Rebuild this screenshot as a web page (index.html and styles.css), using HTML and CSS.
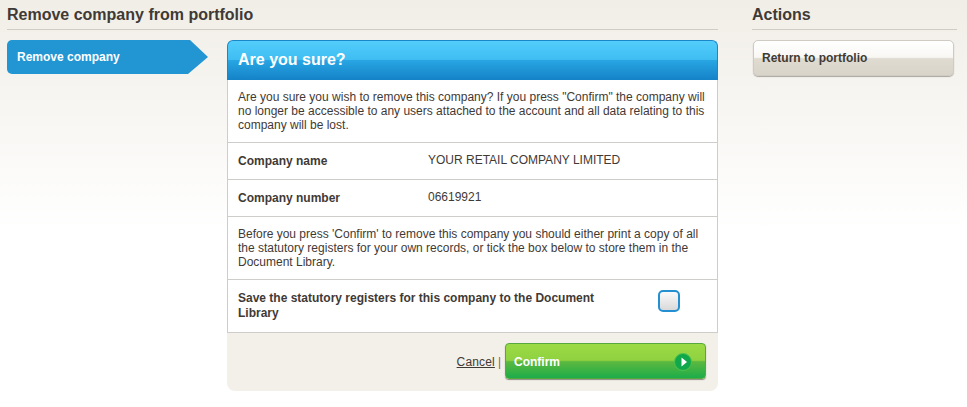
FILE: index.html
```html
<!DOCTYPE html>
<html lang="en">
<head>
  <meta charset="UTF-8" />
  <title>Remove company from portfolio</title>
  <link rel="stylesheet" href="styles.css">
</head>
<body>
  <div id="page">
    <!-- Main column -->
    <div id="content">
      <h1 class="page-title">Remove company from portfolio</h1>
      <div id="columns">
        <div class="step-tab">Remove company</div>
        <div id="panel">
          <h2 class="panel-head">Are you sure?</h2>
          <div class="panel-body">
            <p class="row text-row">Are you sure you wish to remove this company? If you press "Confirm" the company will no longer be accessible to any users attached to the account and all data relating to this company will be lost.</p>
            <div class="row field-row">
              <span class="field-label">Company name</span>
              <span class="field-value">YOUR RETAIL COMPANY LIMITED</span>
            </div>
            <div class="row field-row">
              <span class="field-label">Company number</span>
              <span class="field-value">06619921</span>
            </div>
            <p class="row text-row">Before you press 'Confirm' to remove this company you should either print a copy of all the statutory registers for your own records, or tick the box below to store them in the Document Library.</p>
            <div class="row save-row">
              <span class="save-label">Save the statutory registers for this company to the Document Library</span>
              <span class="tick-box"></span>
            </div>
          </div>
          <div class="panel-foot">
            <a class="cancel-link" href="#">Cancel</a>
            <span class="divider">|</span>
            <a class="confirm-btn" href="#">
              Confirm
              <span class="confirm-icon">
                <svg width="18" height="18" viewBox="0 0 18 18"><circle cx="9" cy="9" r="8.5" fill="#10a84a" stroke="#4fc24f"/><path d="M7.5 4.5l5.5 4.5-5.5 4.5z" fill="#fff"/></svg>
              </span>
            </a>
          </div>
        </div>
      </div>
    </div>
    <!-- Actions column -->
    <div id="actions">
      <h1 class="page-title">Actions</h1>
      <a class="action-btn" href="#">Return to portfolio</a>
    </div>
  </div>
</body>
</html>
```

FILE: styles.css
```css
* {
  box-sizing: border-box;
  margin: 0;
  padding: 0;
}
html, body {
  height: 100%;
}
body {
  background: linear-gradient(#f1eee7, #ffffff 230px);
  color: #3f3a36;
  font-family: "Liberation Sans", Arial, sans-serif;
  font-size: 12px;
  overflow: hidden;
}
#page {
  display: flex;
  padding: 0 10px 0 7px;
  gap: 34px;
}
#content {
  width: 711px;
}
#actions {
  width: 205px;
}
.page-title {
  height: 30px;
  padding-top: 6px;
  border-bottom: 1px solid #d0cbc3;
  font-size: 16px;
  line-height: 18px;
  font-weight: bold;
  color: #3f3a36;
}
#columns {
  display: flex;
  align-items: flex-start;
  gap: 19px;
  margin-top: 10px;
}
/* Blue arrow tab on the left */
.step-tab {
  width: 201px;
  height: 34px;
  padding: 10px 0 0 10px;
  background: #2196d3;
  border-radius: 5px 0 0 5px;
  clip-path: polygon(0 0, 183px 0, 100% 50%, 181px 100%, 0 100%);
  color: #fff;
  font-size: 12px;
  line-height: 15px;
  font-weight: bold;
}
#panel {
  width: 491px;
  background: #f3f0e9;
  border-radius: 6px 6px 8px 8px;
}
.panel-head {
  height: 40px;
  padding: 9px 10px 0 10px;
  background: linear-gradient(#52cdfb, #3fbdf2 48%, #28a5e3 50%, #1482c6);
  border: 1px solid #1a87c9;
  border-bottom: 0;
  border-radius: 6px 6px 0 0;
  color: #fff;
  font-size: 16px;
  line-height: 20px;
  font-weight: bold;
}
.panel-body {
  background: #fff;
  border: 1px solid #cfcdc9;
  border-top: 0;
}
.row {
  padding: 0 10px;
  border-bottom: 1px solid #cfcdc9;
  line-height: 14px;
}
.text-row {
  padding-top: 10px;
  padding-bottom: 10px;
}
.field-row {
  display: flex;
  align-items: center;
  height: 37px;
}
.field-label {
  width: 190px;
  font-weight: bold;
}
.field-value {
  margin-top: -2px;
}
.save-row {
  display: flex;
  align-items: flex-start;
  height: 52px;
  padding-top: 11px;
  border-bottom: 0;
  line-height: 15px;
}
.save-label {
  width: 400px;
  font-weight: bold;
}
.tick-box {
  width: 22px;
  height: 22px;
  margin: -1px 0 0 20px;
  background: linear-gradient(#fafafa, #d9d9d9);
  border: 2px solid #2490d2;
  border-radius: 5px;
}
.panel-foot {
  display: flex;
  align-items: center;
  justify-content: flex-end;
  height: 59px;
  padding: 0 12px 2px 0;
  border-top: 1px solid #cfcdc9;
  margin-top: -1px;
}
.cancel-link {
  margin-top: 2px;
  color: #3f3a36;
  letter-spacing: 0.15px;
  text-decoration: underline;
}
.divider {
  margin: 2px 4px 0 3px;
  color: #a8602c;
}
.confirm-btn {
  display: flex;
  align-items: center;
  justify-content: space-between;
  width: 201px;
  height: 36px;
  padding: 1px 13px 0 8px;
  background: linear-gradient(#9cdb45, #8fd140 48%, #5cb83f 52%, #1cad4a);
  border: 1px solid #55a93f;
  border-radius: 4px;
  box-shadow: 0 1px 1px #8b8b84;
  color: #fff;
  font-weight: bold;
  text-decoration: none;
}
.confirm-icon {
  display: flex;
}
.action-btn {
  display: block;
  width: 201px;
  height: 36px;
  margin: 10px 0 0 1px;
  padding: 10px 0 0 8px;
  background: linear-gradient(#fff, #f8f7f4 48%, #dfdbd1 52%, #d8d4c9);
  border: 1px solid #cfcbc3;
  border-radius: 5px;
  box-shadow: 0 1px 1px #a9a69f;
  color: #3f3a36;
  line-height: 14px;
  font-weight: bold;
  text-decoration: none;
}
```
